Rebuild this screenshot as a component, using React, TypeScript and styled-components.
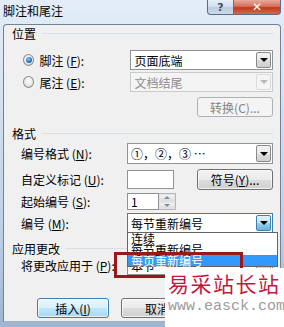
import React from 'react';
import styled, { createGlobalStyle } from 'styled-components';

const GlobalStyle = createGlobalStyle`
  html, body {
    margin: 0;
    padding: 0;
    background: #c9dbee;
  }
  body {
    font-family: 'Noto Sans CJK SC', 'Noto Sans', sans-serif;
    font-size: 12px;
    color: #000;
  }
`;

const Window = styled.div`
  position: relative;
  width: 284px;
  height: 327px;
  overflow: hidden;
  display: flex;
  flex-direction: column;
  background: linear-gradient(180deg, #e4edf7 0%, #d3e1f0 30%, #bcd0e6 70%, #9fb6d0 100%);
`;

const TitleBar = styled.div`
  height: 24px;
  display: flex;
  align-items: flex-start;
  flex-shrink: 0;
`;

const Title = styled.span`
  margin: 3px 0 0 3px;
  font-size: 12px;
  line-height: 16px;
  color: #000;
`;

const CaptionButtons = styled.div`
  margin-left: auto;
  margin-right: 3px;
  display: flex;
`;

const CaptionButton = styled.div<{ $close?: boolean }>`
  width: ${({ $close }) => ($close ? '47px' : '27px')};
  height: 15px;
  box-sizing: border-box;
  display: flex;
  align-items: center;
  justify-content: center;
  border: 1px solid #5a6e86;
  border-top: none;
  border-left: ${({ $close }) => ($close ? 'none' : '1px solid #5a6e86')};
  border-radius: ${({ $close }) => ($close ? '0 0 4px 0' : '0 0 0 4px')};
  background: ${({ $close }) =>
    $close
      ? 'linear-gradient(180deg, #e9a99b 0%, #d4715c 45%, #c0391f 55%, #d66a50 100%)'
      : 'linear-gradient(180deg, #e6eef7 0%, #d4e0ee 45%, #bccde2 55%, #cbdaea 100%)'};
  color: ${({ $close }) => ($close ? '#fff' : '#3a4d66')};
  font-family: 'DejaVu Sans', sans-serif;
  font-weight: bold;
  font-size: ${({ $close }) => ($close ? '12px' : '11px')};
  line-height: 1;
`;

const Client = styled.div`
  flex: 1;
  margin: 0 3px 5px;
  padding: 0 7px 0 4px;
  background: #f0f0f0;
  border: 1px solid #6f8296;
  border-bottom-color: #9fb1c4;
  border-radius: 4px 4px 0 0;
  display: flex;
  flex-direction: column;
`;

const GroupHeader = styled.div<{ $top: number; $h?: number }>`
  display: flex;
  align-items: center;
  gap: 6px;
  margin-top: ${({ $top }) => $top}px;
  height: ${({ $h }) => $h ?? 16}px;
  padding-left: 4px;
  font-size: 12px;
  &::after {
    content: '';
    flex: 1;
    height: 1px;
    background: #d5dfe5;
  }
`;

const Row = styled.div<{ $top: number; $h?: number; $indent?: number }>`
  display: flex;
  align-items: center;
  margin-top: ${({ $top }) => $top}px;
  height: ${({ $h }) => $h ?? 20}px;
  padding-left: ${({ $indent }) => $indent ?? 13}px;
`;

const Label = styled.span<{ $w?: number }>`
  width: ${({ $w }) => $w ?? 106}px;
  flex-shrink: 0;
  white-space: nowrap;
  font-size: 12px;
`;

const U = styled.span`
  text-decoration: underline;
`;

const Radio = styled.span<{ $checked?: boolean }>`
  width: 12px;
  height: 12px;
  margin-right: 5px;
  margin-left: 1px;
  box-sizing: border-box;
  border-radius: 50%;
  border: 1px solid #8e8f8f;
  background: radial-gradient(circle at 50% 40%, #ffffff 0%, #e6e6e6 60%, #c9c9c9 100%);
  display: flex;
  align-items: center;
  justify-content: center;
  &::after {
    content: '';
    display: ${({ $checked }) => ($checked ? 'block' : 'none')};
    width: 6px;
    height: 6px;
    border-radius: 50%;
    background: radial-gradient(circle at 40% 35%, #8ccbf5 0%, #2a6fbf 60%, #103f85 100%);
  }
`;

const Combo = styled.div<{ $disabled?: boolean; $open?: boolean }>`
  position: relative;
  width: 151px;
  height: 100%;
  box-sizing: border-box;
  display: flex;
  align-items: center;
  border: 1px solid ${({ $disabled, $open }) => ($disabled ? '#c9cacb' : $open ? '#3c7fb1' : '#8e9299')};
  background: ${({ $disabled }) => ($disabled ? '#f4f4f4' : '#fff')};
  color: ${({ $disabled }) => ($disabled ? '#8d8d8d' : '#000')};
  padding-left: 3px;
  font-size: 12px;
`;

const ComboText = styled.span`
  flex: 1;
  white-space: nowrap;
  overflow: hidden;
`;

const DropButton = styled.span<{ $disabled?: boolean; $open?: boolean }>`
  width: 15px;
  height: calc(100% - 2px);
  margin-right: 1px;
  box-sizing: border-box;
  display: flex;
  align-items: center;
  justify-content: center;
  border: 1px solid ${({ $disabled, $open }) => ($disabled ? '#dcdcdc' : $open ? '#3c7fb1' : '#8a8a8a')};
  border-radius: 2px;
  background: ${({ $disabled, $open }) =>
    $disabled
      ? '#f4f4f4'
      : $open
      ? 'linear-gradient(180deg, #e3f3fb 0%, #c4e5f6 50%, #98d1ef 51%, #68b3db 100%)'
      : 'linear-gradient(180deg, #f2f2f2 0%, #ebebeb 50%, #dddddd 51%, #cfcfcf 100%)'};
  &::after {
    content: '';
    border-left: 4px solid transparent;
    border-right: 4px solid transparent;
    border-top: 4px solid ${({ $disabled }) => ($disabled ? '#b8b8b8' : '#000')};
  }
`;

const DropList = styled.div`
  position: absolute;
  left: -1px;
  top: 100%;
  width: 151px;
  box-sizing: border-box;
  border: 1px solid #646464;
  background: #fff;
  z-index: 2;
`;

const DropItem = styled.div<{ $selected?: boolean }>`
  height: 11px;
  line-height: 11px;
  padding-left: 3px;
  white-space: nowrap;
  font-size: 12px;
  background: ${({ $selected }) => ($selected ? '#3399ff' : 'transparent')};
  color: ${({ $selected }) => ($selected ? '#fff' : '#000')};
`;

const Button = styled.div<{ $w?: number; $disabled?: boolean; $default?: boolean }>`
  width: ${({ $w }) => $w ?? 76}px;
  height: 100%;
  box-sizing: border-box;
  display: flex;
  align-items: center;
  justify-content: center;
  border-radius: 3px;
  font-size: 12px;
  white-space: nowrap;
  border: 1px solid ${({ $disabled, $default }) => ($disabled ? '#adb2b5' : $default ? '#3c7fb1' : '#707070')};
  color: ${({ $disabled }) => ($disabled ? '#838383' : '#000')};
  background: ${({ $disabled, $default }) =>
    $disabled
      ? '#f4f4f4'
      : $default
      ? 'linear-gradient(180deg, #eaf6fd 0%, #d9f0fc 50%, #bee6fd 51%, #a7d9f5 100%)'
      : 'linear-gradient(180deg, #f2f2f2 0%, #ebebeb 50%, #dddddd 51%, #cfcfcf 100%)'};
  box-shadow: inset 0 0 0 1px ${({ $disabled }) => ($disabled ? 'transparent' : 'rgba(255,255,255,0.7)')};
`;

const RightRow = styled.div<{ $top: number }>`
  display: flex;
  justify-content: flex-end;
  margin-top: ${({ $top }) => $top}px;
  height: 20px;
`;

const TextBox = styled.div<{ $w: number; $h?: number }>`
  width: ${({ $w }) => $w}px;
  height: ${({ $h }) => ($h ? `${$h}px` : '100%')};
  box-sizing: border-box;
  border: 1px solid #8e9299;
  background: #fff;
  padding-left: 3px;
  display: flex;
  align-items: center;
  font-size: 12px;
`;

const Spacer = styled.div`
  flex: 1;
`;

const Spinner = styled.div`
  display: flex;
  height: 100%;
`;

const SpinButtons = styled.div`
  width: 17px;
  display: flex;
  flex-direction: column;
  border: 1px solid #b5b8bd;
  border-left: none;
  box-sizing: border-box;
`;

const SpinHalf = styled.div<{ $down?: boolean }>`
  flex: 1;
  display: flex;
  align-items: center;
  justify-content: center;
  background: linear-gradient(180deg, #f4f4f4 0%, #dcdcdc 100%);
  border: 1px solid #e3e3e3;
  &::after {
    content: '';
    border-left: 3px solid transparent;
    border-right: 3px solid transparent;
    ${({ $down }) => ($down ? 'border-top: 3px solid #7a8ca3;' : 'border-bottom: 3px solid #7a8ca3;')}
  }
`;

const ButtonRow = styled.div`
  display: flex;
  gap: 12px;
  margin-top: 23px;
  height: 20px;
  padding-left: 29px;
`;

const Highlight = styled.div`
  position: absolute;
  left: 114px;
  top: 252px;
  width: 129px;
  height: 26px;
  box-sizing: border-box;
  border: 3px solid #98181d;
  z-index: 3;
`;

const Watermark = styled.div`
  position: absolute;
  left: 165px;
  top: 268px;
  width: 119px;
  height: 59px;
  background: #fff;
  z-index: 4;
  display: flex;
  flex-direction: column;
  padding-left: 3px;
  box-sizing: border-box;
`;

const WatermarkTitle = styled.div`
  margin-top: 2px;
  font-family: 'Noto Sans CJK SC', sans-serif;
  font-weight: 400;
  font-size: 21px;
  letter-spacing: 1.5px;
  line-height: 26px;
  color: #c4163f;
  white-space: nowrap;
`;

const WatermarkUrl = styled.div`
  margin-top: 2px;
  font-family: 'Liberation Mono', monospace;
  font-size: 15px;
  line-height: 18px;
  color: #9c9c9c;
  white-space: nowrap;
`;

const App: React.FC = () => {
  return (
    <>
      <GlobalStyle />
      <Window>
        <TitleBar>
          <Title>脚注和尾注</Title>
          <CaptionButtons>
            <CaptionButton>?</CaptionButton>
            <CaptionButton $close>✕</CaptionButton>
          </CaptionButtons>
        </TitleBar>

        <Client>
          <GroupHeader $top={0}>位置</GroupHeader>
          <Row $top={9} $indent={14}>
            <Radio $checked />
            <Label $w={91}>
              脚注 (<U>F</U>):
            </Label>
            <Combo>
              <ComboText>页面底端</ComboText>
              <DropButton />
            </Combo>
          </Row>
          <Row $top={2} $indent={14}>
            <Radio />
            <Label $w={91}>
              尾注 (<U>E</U>):
            </Label>
            <Combo $disabled>
              <ComboText>文档结尾</ComboText>
              <DropButton $disabled />
            </Combo>
          </Row>
          <RightRow $top={5}>
            <Button $disabled>转换(C)...</Button>
          </RightRow>

          <GroupHeader $top={8}>格式</GroupHeader>
          <Row $top={2} $h={21}>
            <Label>
              编号格式 (<U>N</U>):
            </Label>
            <Combo>
              <ComboText>①，②，③ …</ComboText>
              <DropButton />
            </Combo>
          </Row>
          <Row $top={5} $h={21}>
            <Label>
              自定义标记 (<U>U</U>):
            </Label>
            <TextBox $w={47} $h={19} />
            <Spacer />
            <Button>
              符号(<U>Y</U>)...
            </Button>
          </Row>
          <Row $top={3} $h={17}>
            <Label>
              起始编号 (<U>S</U>):
            </Label>
            <Spinner>
              <TextBox $w={32}>1</TextBox>
              <SpinButtons>
                <SpinHalf />
                <SpinHalf $down />
              </SpinButtons>
            </Spinner>
          </Row>
          <Row $top={3}>
            <Label>
              编号 (<U>M</U>):
            </Label>
            <Combo $open>
              <ComboText>每节重新编号</ComboText>
              <DropButton $open />
              <DropList>
                <DropItem>连续</DropItem>
                <DropItem>每节重新编号</DropItem>
                <DropItem $selected>每页重新编号</DropItem>
              </DropList>
            </Combo>
          </Row>

          <GroupHeader $top={8} $h={14}>应用更改</GroupHeader>
          <Row $top={0}>
            <Label>
              将更改应用于 (<U>P</U>):
            </Label>
            <Combo>
              <ComboText>本节</ComboText>
              <DropButton />
            </Combo>
          </Row>

          <ButtonRow>
            <Button $w={72} $default>
              插入(<U>I</U>)
            </Button>
            <Button $w={72}>取消</Button>
          </ButtonRow>
        </Client>

        <Highlight />
        <Watermark>
          <WatermarkTitle>易采站长站</WatermarkTitle>
          <WatermarkUrl>www.easck.com</WatermarkUrl>
        </Watermark>
      </Window>
    </>
  );
};

export default App;
